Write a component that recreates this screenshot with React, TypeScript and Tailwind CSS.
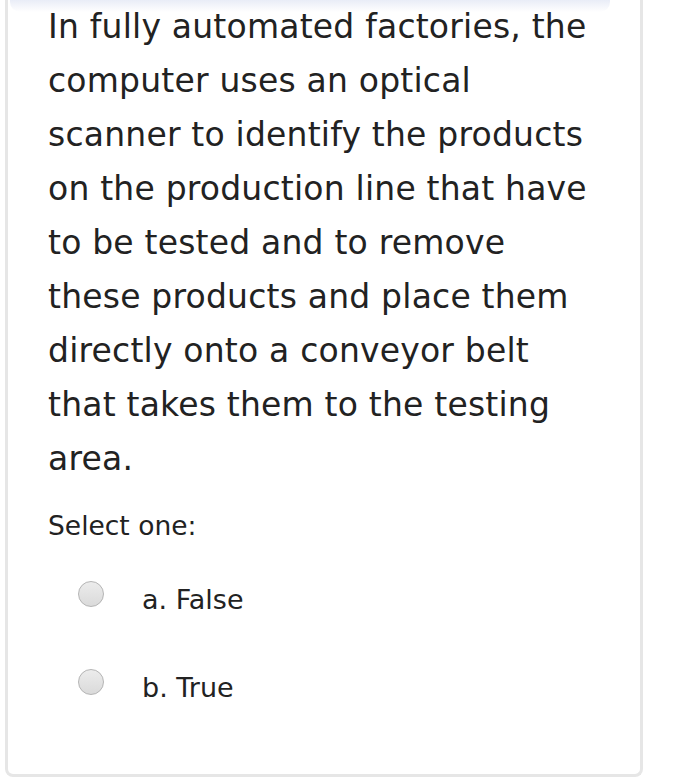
import { useState } from 'react';

const OPTIONS = [
  { id: 'a', label: 'a. False' },
  { id: 'b', label: 'b. True' },
];

export default function App() {
  const [selected, setSelected] = useState<string | null>(null);

  return (
    <div className="relative h-[783px] w-[684px] overflow-hidden bg-white" style={{ fontFamily: '"DejaVu Sans", "Noto Sans", sans-serif' }}>
      {/* shadow of the header above */}
      <div className="pointer-events-none absolute left-[10px] top-0 h-[12px] w-[600px] rounded-b-[10px] bg-gradient-to-b from-[#e9edf7] to-transparent" />

      <div className="ml-[5px] w-[638px] rounded-b-[8px] border-[3px] border-t-0 border-[#e6e6e6] pb-[70px] pl-[40px] pr-[40px] text-[#222]">
        <p className="w-[556px] text-[33px] leading-[54px] tracking-[0.2px]">
          In fully automated factories, the computer uses an optical scanner to identify the products on the production line that have to be tested and to remove these products and place them directly onto a conveyor belt that takes them to the testing area.
        </p>

        <p className="mt-[24px] text-[26.5px] leading-[32px]">Select one:</p>

        <div className="mt-[42px] flex flex-col gap-[56px] pl-[30px]">
          {OPTIONS.map((opt) => (
            <label key={opt.id} className="flex cursor-pointer items-center gap-[38px]">
              <span
                onClick={() => setSelected(opt.id)}
                className={`-mt-[12px] h-[26px] w-[26px] rounded-full border border-[#b4b4b4] bg-gradient-to-b from-[#ececec] to-[#dadada] ${selected === opt.id ? 'ring-4 ring-inset ring-[#555]' : ''}`}
              />
              <span className="text-[27px] leading-[32px] text-[#222]">{opt.label}</span>
            </label>
          ))}
        </div>
      </div>
    </div>
  );
}
